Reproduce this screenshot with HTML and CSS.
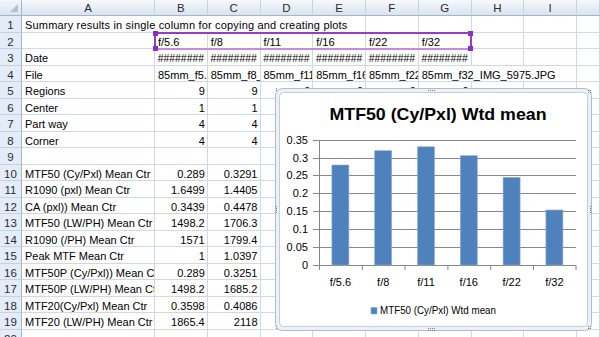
FILE: index.html
```html
<!DOCTYPE html>
<html lang="en">
<head>
    <meta charset="UTF-8">
    <meta name="viewport" content="width=device-width, initial-scale=1.0">
    <title>MTF summary</title>
    <link rel="stylesheet" href="styles.css">
</head>
<body>
    <div class="sheet" id="sheet"></div>

    <div class="range-sel">
        <span class="handle tl"></span>
        <span class="handle tr"></span>
        <span class="handle bl"></span>
        <span class="handle br"></span>
    </div>

    <div class="chart">
        <svg viewBox="275 88 317 243" width="317" height="243">
            <defs>
                <pattern id="dots" width="2" height="2" patternUnits="userSpaceOnUse">
                    <rect width="1" height="1" fill="#6f7e8e"></rect>
                </pattern>
            </defs>
            <rect class="frame-out" x="275.5" y="88.5" width="316" height="242" rx="7"></rect>
            <rect class="frame-in" x="279.5" y="92.5" width="308" height="234" rx="4"></rect>

            <text class="title" x="438" y="120" text-anchor="middle" textLength="217" lengthAdjust="spacingAndGlyphs">MTF50 (Cy/Pxl) Wtd mean</text>

            <g class="grid-lines">
                <line x1="313" y1="140.5" x2="576" y2="140.5"></line>
                <line x1="313" y1="158.5" x2="576" y2="158.5"></line>
                <line x1="313" y1="175.5" x2="576" y2="175.5"></line>
                <line x1="313" y1="193.5" x2="576" y2="193.5"></line>
                <line x1="313" y1="211.5" x2="576" y2="211.5"></line>
                <line x1="313" y1="229.5" x2="576" y2="229.5"></line>
                <line x1="313" y1="247.5" x2="576" y2="247.5"></line>
                <line x1="313" y1="265.5" x2="576" y2="265.5"></line>
            </g>

            <g class="y-labels" text-anchor="end">
                <text x="308" y="144">0.35</text>
                <text x="308" y="162">0.3</text>
                <text x="308" y="179">0.25</text>
                <text x="308" y="197">0.2</text>
                <text x="308" y="215">0.15</text>
                <text x="308" y="233">0.1</text>
                <text x="308" y="251">0.05</text>
                <text x="308" y="269">0</text>
            </g>

            <g id="bars"></g>

            <g class="axis">
                <line x1="319.5" y1="140" x2="319.5" y2="266"></line>
                <line x1="319.5" y1="265" x2="319.5" y2="270"></line>
                <line x1="362.3" y1="265" x2="362.3" y2="270"></line>
                <line x1="405.1" y1="265" x2="405.1" y2="270"></line>
                <line x1="447.9" y1="265" x2="447.9" y2="270"></line>
                <line x1="490.7" y1="265" x2="490.7" y2="270"></line>
                <line x1="533.5" y1="265" x2="533.5" y2="270"></line>
                <line x1="576" y1="265" x2="576" y2="270"></line>
            </g>

            <g class="x-labels" text-anchor="middle">
                <text x="340.4" y="286">f/5.6</text>
                <text x="383.2" y="286">f/8</text>
                <text x="426" y="286">f/11</text>
                <text x="468.8" y="286">f/16</text>
                <text x="511.6" y="286">f/22</text>
                <text x="554.4" y="286">f/32</text>
            </g>

            <rect class="bar" x="371" y="307.5" width="6" height="6.5"></rect>
            <text class="legend" x="380" y="314" textLength="116" lengthAdjust="spacingAndGlyphs">MTF50 (Cy/Pxl) Wtd mean</text>

            <!-- selection handles of the chart frame -->
            <rect x="274" y="88" width="4" height="4" fill="url(#dots)"></rect>
            <rect x="428" y="89" width="8" height="3" fill="url(#dots)"></rect>
            <rect x="588" y="89" width="4" height="4" fill="url(#dots)"></rect>
            <rect x="275" y="205" width="3" height="8" fill="url(#dots)"></rect>
            <rect x="589" y="206" width="3" height="8" fill="url(#dots)"></rect>
            <rect x="274" y="326" width="4" height="4" fill="url(#dots)"></rect>
            <rect x="428" y="328" width="8" height="3" fill="url(#dots)"></rect>
            <rect x="588" y="326" width="4" height="4" fill="url(#dots)"></rect>
        </svg>
    </div>

    <script>
        const columns = ['A', 'B', 'C', 'D', 'E', 'F', 'G', 'H', 'I', ''];
        const hash = '########';
        const rows = [
            [{ t: 'Summary results in single column for copying and creating plots', span: 5 }],
            ['', 'f/5.6', 'f/8', 'f/11', 'f/16', 'f/22', 'f/32'],
            ['Date', hash, hash, hash, hash, hash, hash],
            ['File', '85mm_f5.6_IMG_5970.JPG', '85mm_f8_IMG_5971.JPG', '85mm_f11_IMG_5972.JPG',
                '85mm_f16_IMG_5973.JPG', '85mm_f22_IMG_5974.JPG', { t: '85mm_f32_IMG_5975.JPG', span: 3 }],
            ['Regions', 9, 9, 9, 9, 9, 9],
            ['Center', 1, 1],
            ['Part way', 4, 4],
            ['Corner', 4, 4],
            [],
            ['MTF50 (Cy/Pxl) Mean Ctr', 0.289, 0.3291],
            ['R1090 (pxl) Mean Ctr', 1.6499, 1.4405],
            ['CA (pxl)) Mean Ctr', 0.3439, 0.4478],
            ['MTF50 (LW/PH) Mean Ctr', 1498.2, 1706.3],
            ['R1090 (/PH) Mean Ctr', 1571, 1799.4],
            ['Peak MTF Mean Ctr', 1, 1.0397],
            ['MTF50P (Cy/Pxl)) Mean Ctr', 0.289, 0.3251],
            ['MTF50P (LW/PH) Mean Ctr', 1498.2, 1685.2],
            ['MTF20(Cy/Pxl) Mean Ctr', 0.3598, 0.4086],
            ['MTF20 (LW/PH) Mean Ctr', 1865.4, 2118],
            []
        ];

        const sheet = document.getElementById('sheet');

        function addCell(cls, text, span) {
            const el = document.createElement('div');
            el.className = cls;
            el.textContent = text;
            if (span) el.style.gridColumn = 'span ' + span;
            sheet.appendChild(el);
        }

        addCell('corner', '');
        columns.forEach(c => addCell('colhead', c));

        rows.forEach((row, r) => {
            addCell('rowhead', r + 1);
            let c = 0;
            while (c < columns.length) {
                let v = row[c];
                let span = 1;
                if (v && typeof v === 'object') {
                    span = v.span;
                    v = v.t;
                }
                let cls = 'cell';
                if (typeof v === 'number') cls += ' num';
                if (v === hash) cls += ' hash';
                if (r === 0 && c === 0) cls += ' wide';
                addCell(cls, v === undefined ? '' : String(v), span > 1 ? span : 0);
                c += span;
            }
        });

        // bars: base at y=265, 0.35 at y=140
        const values = [0.28, 0.32, 0.331, 0.306, 0.2455, 0.154];
        const bars = document.getElementById('bars');
        values.forEach((v, i) => {
            const h = v * 125 / 0.35;
            const cx = 319 + 42.8 * (i + 0.5);
            const rect = document.createElementNS('http://www.w3.org/2000/svg', 'rect');
            rect.setAttribute('class', 'bar');
            rect.setAttribute('x', cx - 8.5);
            rect.setAttribute('y', 265 - h);
            rect.setAttribute('width', 17);
            rect.setAttribute('height', h);
            bars.appendChild(rect);
        });
    </script>
</body>
</html>
```

FILE: styles.css
```css
body {
    margin: 0;
    width: 600px;
    height: 337px;
    overflow: hidden;
    background: #ffffff;
    font-family: "Liberation Sans", Arial, sans-serif;
    font-size: 11px;
    color: #000000;
    position: relative;
}
.sheet {
    display: grid;
    grid-template-columns: 22px 133px repeat(8, 52.75px) 1fr;
    grid-template-rows: 16px repeat(20, 16.5px);
    width: 600px;
    height: 337px;
    overflow: hidden;
}
.corner {
    background: linear-gradient(#f4f7fb, #dbe4ef);
    border-right: 1px solid #9eb6ce;
    border-bottom: 1px solid #9eb6ce;
    position: relative;
}
.corner::after {
    content: "";
    position: absolute;
    right: 3px;
    bottom: 3px;
    border-left: 8px solid transparent;
    border-bottom: 8px solid #b4c3d4;
}
.colhead {
    background: linear-gradient(#f7f9fc, #dae3ee);
    border-right: 1px solid #c5d2e1;
    border-bottom: 1px solid #9eb6ce;
    text-align: center;
    line-height: 17px;
    font-size: 11.5px;
    color: #2c2c2c;
}
.rowhead {
    background: #e4ecf7;
    border-right: 1px solid #9eb6ce;
    border-bottom: 1px solid #c5d2e1;
    text-align: center;
    line-height: 17px;
    padding-top: 1px;
    font-size: 11.5px;
    color: #2c2c2c;
}
.cell {
    border-right: 1px solid #d0d7e5;
    border-bottom: 1px solid #d0d7e5;
    padding: 1px 2px 0 3px;
    line-height: 17px;
    white-space: nowrap;
    overflow: hidden;
}
.cell.wide {
    letter-spacing: 0.18px;
}
.cell.num {
    text-align: right;
}
.cell.hash {
    text-align: center;
    padding-left: 0;
    padding-right: 0;
    font-size: 10.4px;
}
.range-sel {
    position: absolute;
    left: 154px;
    top: 32px;
    width: 318px;
    height: 18px;
    box-sizing: border-box;
    border: 2px solid #9a3acb;
    border-bottom-color: #c68ae2;
}
.range-sel .handle {
    position: absolute;
    width: 5px;
    height: 5px;
    background: #8d2fc2;
}
.range-sel .tl { left: -3px; top: -3px; }
.range-sel .tr { right: -3px; top: -3px; }
.range-sel .bl { left: -3px; bottom: -3px; }
.range-sel .br { right: -3px; bottom: -3px; }
.chart {
    position: absolute;
    left: 275px;
    top: 88px;
    width: 317px;
    height: 243px;
}
.chart svg {
    display: block;
    font-family: "Liberation Sans", Arial, sans-serif;
}
.frame-out {
    fill: #edf1f6;
    stroke: #aebccb;
}
.frame-in {
    fill: #ffffff;
    stroke: #c3cedb;
}
.title {
    font-size: 17px;
    font-weight: bold;
    fill: #000000;
}
.grid-lines line {
    stroke: #878787;
    stroke-width: 1;
}
.axis line {
    stroke: #868686;
    stroke-width: 1;
}
.y-labels text,
.x-labels text {
    font-size: 11px;
    fill: #000000;
}
.bar {
    fill: #4f81bd;
    stroke: #8fb0da;
    stroke-width: 0.6;
}
.legend {
    font-size: 11px;
    fill: #000000;
}
```
